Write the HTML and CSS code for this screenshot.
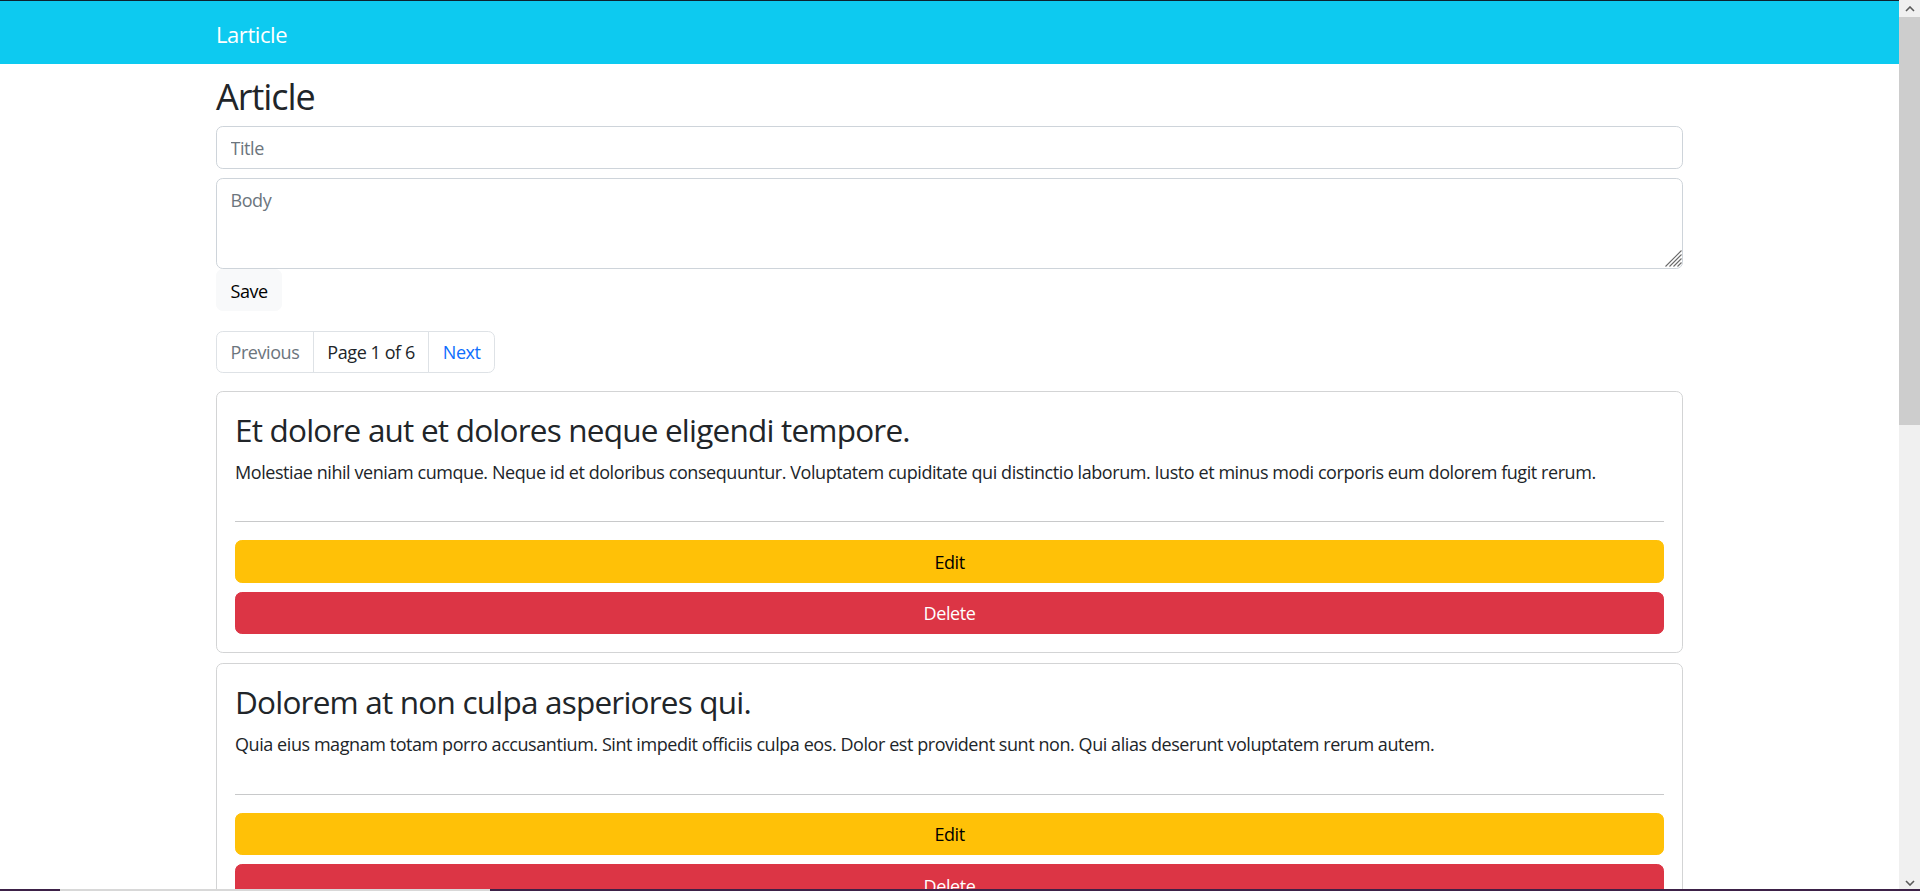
FILE: index.html
```html
<!DOCTYPE html>
<html lang="en">
<head>
<meta charset="utf-8">
<title>Larticle</title>
<link rel="stylesheet" href="styles.css">
</head>
<body>
<div class="screen">
  <div class="viewport">
    <nav class="navbar">
      <div class="container">
        <a class="brand" href="#">Larticle</a>
      </div>
    </nav>
    <main class="container">
      <h2 class="page-title">Article</h2>
      <form class="article-form">
        <input class="field field-title" type="text" placeholder="Title">
        <div class="body-wrap">
          <textarea class="field field-body" placeholder="Body"></textarea>
          <svg class="grip" width="18" height="18" viewBox="0 0 18 18" aria-hidden="true">
            <path d="M1.5 17.5 L17.5 1.5 M5.5 17.5 L17.5 5.5 M9.5 17.5 L17.5 9.5 M13.5 17.5 L17.5 13.5" stroke="#6a6a6a" stroke-width="1.1" fill="none"/>
          </svg>
        </div>
        <button class="btn btn-light" type="button">Save</button>
      </form>
      <ul class="pager">
        <li class="pager-item is-disabled"><span class="pager-link">Previous</span></li>
        <li class="pager-item"><span class="pager-link pager-current">Page 1 of 6</span></li>
        <li class="pager-item"><a class="pager-link pager-next" href="#">Next</a></li>
      </ul>
      <div class="card">
        <div class="card-body">
          <h3 class="card-title">Et dolore aut et dolores neque eligendi tempore.</h3>
          <p class="card-text">Molestiae nihil veniam cumque. Neque id et doloribus consequuntur. Voluptatem cupiditate qui distinctio laborum. Iusto et minus modi corporis eum dolorem fugit rerum.</p>
          <hr class="divider">
          <button class="btn btn-warning btn-block" type="button">Edit</button>
          <button class="btn btn-danger btn-block btn-gap" type="button">Delete</button>
        </div>
      </div>
      <div class="card">
        <div class="card-body">
          <h3 class="card-title">Dolorem at non culpa asperiores qui.</h3>
          <p class="card-text">Quia eius magnam totam porro accusantium. Sint impedit officiis culpa eos. Dolor est provident sunt non. Qui alias deserunt voluptatem rerum autem.</p>
          <hr class="divider">
          <button class="btn btn-warning btn-block" type="button">Edit</button>
          <button class="btn btn-danger btn-block btn-gap" type="button">Delete</button>
        </div>
      </div>
    </main>
  </div>
  <div class="scrollbar">
    <div class="sb-button">
      <svg width="10" height="6" viewBox="0 0 10 6"><path d="M1 5 L5 1 L9 5" fill="none" stroke="#5a5a5a" stroke-width="1.6"/></svg>
    </div>
    <div class="sb-thumb"></div>
    <div class="sb-track"></div>
    <div class="sb-button">
      <svg width="10" height="6" viewBox="0 0 10 6"><path d="M1 1 L5 5 L9 1" fill="none" stroke="#5a5a5a" stroke-width="1.6"/></svg>
    </div>
  </div>
</div>
<div class="taskbar-edge"><span class="edge-dark edge-a"></span><span class="edge-light"></span><span class="edge-dark edge-b"></span></div>
</body>
</html>
```

FILE: styles.css
```css
html, body {
  margin: 0;
  padding: 0;
  height: 100%;
  overflow: hidden;
}

body {
  font-family: "Open Sans", "Noto Sans", sans-serif;
  font-size: 18px;
  line-height: 1.5;
  letter-spacing: -0.024em;
  color: #212529;
  background: #fff;
}

.screen {
  display: flex;
  height: 100vh;
}

.viewport {
  flex: 1;
  min-width: 0;
  overflow: hidden;
}

.container {
  width: 1467px;
  margin-left: 216px;
}

/* navbar */
.navbar {
  height: 63px;
  border-top: 1px solid #0c2230;
  background: #0dcaf0;
  display: flex;
  align-items: center;
}

.brand {
  font-size: 22px;
  line-height: 30px;
  color: #fff;
  text-decoration: none;
  display: inline-block;
  margin-top: 3px;
}

/* heading */
.page-title {
  font-size: 36px;
  font-weight: 400;
  line-height: 43px;
  letter-spacing: -0.029em;
  margin: 11px 0 7.5px;
}

/* form */
.article-form {
  display: flex;
  flex-direction: column;
  align-items: flex-start;
}

.field {
  box-sizing: border-box;
  width: 100%;
  font-family: inherit;
  font-size: 18px;
  line-height: 27px;
  letter-spacing: inherit;
  color: #212529;
  border: 1px solid #ced4da;
  border-radius: 6.75px;
  padding: 7.5px 13.5px 6px;
  background: #fff;
  outline: none;
}

.field::placeholder {
  color: #6c757d;
  opacity: 1;
}

.field-title {
  height: 43px;
  margin-bottom: 9px;
}

.body-wrap {
  position: relative;
  width: 100%;
}

.field-body {
  height: 91px;
  display: block;
  resize: none;
  padding-top: 8px;
}

.grip {
  position: absolute;
  right: 1px;
  bottom: 2px;
}

/* buttons */
.btn {
  box-sizing: border-box;
  font-family: inherit;
  font-size: 18px;
  line-height: 27px;
  letter-spacing: inherit;
  padding: 7.5px 13.5px 6px;
  border: 1px solid transparent;
  border-radius: 6.75px;
  cursor: pointer;
  text-align: center;
}

.btn-light {
  background: #f8f9fa;
  border-color: #f8f9fa;
  color: #000;
  padding-top: 8.5px;
  padding-bottom: 5px;
}

.btn-warning {
  background: #ffc107;
  border-color: #ffc107;
  color: #000;
}

.btn-danger {
  background: #dc3545;
  border-color: #dc3545;
  color: #fff;
}

.btn-block {
  display: block;
  width: 100%;
}

.btn-gap {
  margin-top: 9px;
}

/* pagination */
.pager {
  list-style: none;
  display: flex;
  padding: 0;
  margin: 19.5px 0 17.5px;
}

.pager-item + .pager-item .pager-link {
  margin-left: -1px;
}

.pager-link {
  display: block;
  padding: 7.5px 13.5px 6px;
  line-height: 27px;
  border: 1px solid #dee2e6;
  background: #fff;
  text-decoration: none;
  color: #212529;
}

.pager-item:first-child .pager-link {
  border-radius: 6.75px 0 0 6.75px;
}

.pager-item:last-child .pager-link {
  border-radius: 0 6.75px 6.75px 0;
}

.is-disabled .pager-link {
  color: #6c757d;
}

.pager-next {
  color: #0d6efd;
}

/* cards */
.card {
  border: 1px solid #d3d4d5;
  border-radius: 6.75px;
  margin-bottom: 9.5px;
  background: #fff;
}

.card-body {
  padding: 18px;
  display: flex;
  flex-direction: column;
}

.card-title {
  font-size: 31.5px;
  font-weight: 400;
  line-height: 37.8px;
  letter-spacing: -0.79px;
  margin: 1px 0 8px;
}

.card-text {
  margin: 0 0 18px;
  padding-top: 2.5px;
}

.divider {
  width: 100%;
  border: 0;
  border-top: 1px solid #c8c9ca;
  margin: 17.5px 0 18px;
}

/* scrollbar */
.scrollbar {
  width: 21px;
  flex: none;
  display: flex;
  flex-direction: column;
  background: #f0f0f0;
}

.sb-button {
  height: 17px;
  flex: none;
  display: flex;
  align-items: center;
  justify-content: center;
  background: #f0f0f0;
}

.sb-thumb {
  height: 408px;
  flex: none;
  background: #cdcdcd;
}

.sb-track {
  flex: 1;
}

/* bottom edge of the screen capture */
.taskbar-edge {
  position: fixed;
  left: 0;
  right: 0;
  bottom: 0;
  height: 2px;
  display: flex;
}

.edge-dark {
  background: #3d2147;
}

.edge-a {
  width: 60px;
}

.edge-light {
  width: 430px;
  background: #d8d8d8;
}

.edge-b {
  flex: 1;
}
```
